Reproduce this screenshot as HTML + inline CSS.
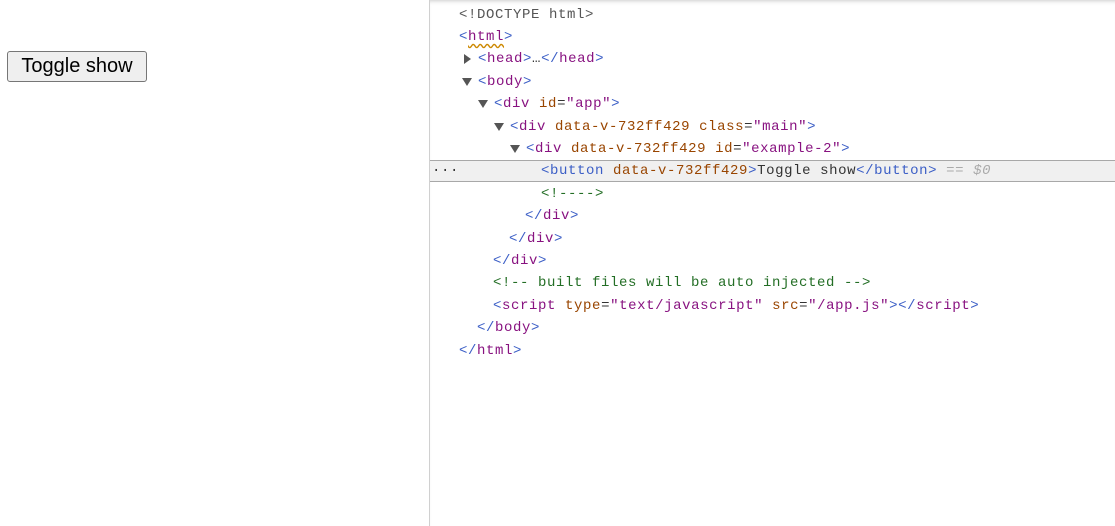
<!DOCTYPE html>
<html><head><style>
body{margin:0;width:1115px;height:526px;overflow:hidden;background:#fff;position:relative;font-family:"Liberation Sans",sans-serif}
#btn{position:absolute;left:7px;top:51px;width:140px;height:31px;box-sizing:border-box;border:1px solid #767676;border-radius:3px;background:#efefef;font-size:20px;color:#000;text-align:center;line-height:28px}
#dev{position:absolute;left:429px;top:0;width:686px;height:526px;border-left:1px solid #d0d0d0;box-shadow:inset 0 4px 4px -3px #ccc}
.l{position:absolute;left:0;height:22px;line-height:24px;font-family:"Liberation Mono",monospace;font-size:14px;letter-spacing:0.6px;white-space:pre;color:#333;width:686px}
.t{color:#881280}.a{color:#994500}.c{color:#236e25}.g{color:#555}.bl{color:#3b5ec6}
.sel{background:#f0f0f0;border-top:1px solid #a8a8a8;border-bottom:1px solid #a8a8a8;box-sizing:border-box}
.dn{position:absolute;top:8px;border-top:8px solid #555;border-left:5px solid transparent;border-right:5px solid transparent}
</style></head><body>
<div id="btn">Toggle show</div>
<div id="dev">
<div class="l" style="top:3px"><span style="position:absolute;left:29px" class="g">&lt;!DOCTYPE html&gt;</span></div>
<div class="l" style="top:25px"><span style="position:absolute;left:29px"><span class="bl">&lt;</span><span class="t" style="text-decoration:underline wavy #c80;text-underline-offset:3px">html</span><span class="bl">&gt;</span></span></div>
<div class="l" style="top:47px"><span style="position:absolute;left:34px;top:7px;border-left:7px solid #555;border-top:5px solid transparent;border-bottom:5px solid transparent"></span><span style="position:absolute;left:48px"><span class="bl">&lt;</span><span class="t">head</span><span class="bl">&gt;</span>…<span class="bl">&lt;/</span><span class="t">head</span><span class="bl">&gt;</span></span></div>
<div class="l" style="top:70px"><span class="dn" style="left:32px"></span><span style="position:absolute;left:48px"><span class="bl">&lt;</span><span class="t">body</span><span class="bl">&gt;</span></span></div>
<div class="l" style="top:92px"><span class="dn" style="left:48px"></span><span style="position:absolute;left:64px"><span class="bl">&lt;</span><span class="t">div</span> <span class="a">id</span>=<span class="t">"app"</span><span class="bl">&gt;</span></span></div>
<div class="l" style="top:115px"><span class="dn" style="left:64px"></span><span style="position:absolute;left:80px"><span class="bl">&lt;</span><span class="t">div</span> <span class="a">data-v-732ff429</span> <span class="a">class</span>=<span class="t">"main"</span><span class="bl">&gt;</span></span></div>
<div class="l" style="top:137px"><span class="dn" style="left:80px"></span><span style="position:absolute;left:96px"><span class="bl">&lt;</span><span class="t">div</span> <span class="a">data-v-732ff429</span> <span class="a">id</span>=<span class="t">"example-2"</span><span class="bl">&gt;</span></span></div>
<div class="l sel" style="top:160px;line-height:21px"><span style="position:absolute;left:2px;color:#333">···</span><span style="position:absolute;left:111px"><span class="bl">&lt;button</span> <span class="a">data-v-732ff429</span><span class="bl">&gt;</span>Toggle show<span class="bl">&lt;/button&gt;</span> <span style="color:#aaa">== <i>$0</i></span></span></div>
<div class="l" style="top:182px"><span style="position:absolute;left:111px" class="c">&lt;!----&gt;</span></div>
<div class="l" style="top:204px"><span style="position:absolute;left:95px"><span class="bl">&lt;/</span><span class="t">div</span><span class="bl">&gt;</span></span></div>
<div class="l" style="top:227px"><span style="position:absolute;left:79px"><span class="bl">&lt;/</span><span class="t">div</span><span class="bl">&gt;</span></span></div>
<div class="l" style="top:249px"><span style="position:absolute;left:63px"><span class="bl">&lt;/</span><span class="t">div</span><span class="bl">&gt;</span></span></div>
<div class="l" style="top:271px"><span style="position:absolute;left:63px" class="c">&lt;!-- built files will be auto injected --&gt;</span></div>
<div class="l" style="top:294px"><span style="position:absolute;left:63px"><span class="bl">&lt;</span><span class="t">script</span> <span class="a">type</span>=<span class="t">"text/javascript"</span> <span class="a">src</span>=<span class="t">"/app.js"</span><span class="bl">&gt;&lt;/</span><span class="t">script</span><span class="bl">&gt;</span></span></div>
<div class="l" style="top:316px"><span style="position:absolute;left:47px"><span class="bl">&lt;/</span><span class="t">body</span><span class="bl">&gt;</span></span></div>
<div class="l" style="top:339px"><span style="position:absolute;left:29px"><span class="bl">&lt;/</span><span class="t">html</span><span class="bl">&gt;</span></span></div>
</div>
</body></html>
